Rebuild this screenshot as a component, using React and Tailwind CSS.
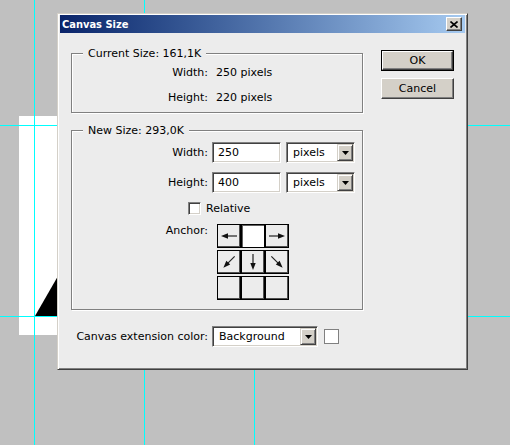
import React from "react";

const F = "font-['DejaVu_Sans',sans-serif]";

function Sunken({ className = "", children }) {
  return (
    <div
      className={`bg-white border border-t-[#808080] border-l-[#808080] border-r-white border-b-white shadow-[inset_1px_1px_0_#404040,inset_-1px_-1px_0_#d4d0c8] ${className}`}
    >
      {children}
    </div>
  );
}

function DropBtn() {
  return (
    <div className="w-[16px] h-full bg-[#d4d0c8] border border-t-[#d4d0c8] border-l-[#d4d0c8] border-r-[#404040] border-b-[#404040] shadow-[inset_1px_1px_0_#fff,inset_-1px_-1px_0_#808080] flex items-center justify-center">
      <svg width="7" height="4" viewBox="0 0 7 4">
        <polygon points="0,0 7,0 3.5,4" fill="#000" />
      </svg>
    </div>
  );
}

function Select({ value, className = "" }) {
  return (
    <Sunken className={`flex items-center p-[1px] ${className}`}>
      <span className="flex-1 pl-[5px]">{value}</span>
      <DropBtn />
    </Sunken>
  );
}

function Button({ children, def }) {
  return (
    <div className={`h-[21px] w-[73px] ${def ? "border border-black" : ""}`}>
      <div className="h-full w-full bg-[#d4d0c8] border border-t-white border-l-white border-r-[#404040] border-b-[#404040] shadow-[inset_-1px_-1px_0_#808080] flex items-center justify-center">
        {children}
      </div>
    </div>
  );
}

function Arrow({ rot }) {
  return (
    <svg width="22" height="22" viewBox="0 0 22 22">
      <g transform={`rotate(${rot} 11 11)`}>
        <line x1="3" y1="11" x2="15" y2="11" stroke="#222" strokeWidth="1.2" />
        <polygon points="19,11 12,8.3 12,13.7" fill="#111" />
      </g>
    </svg>
  );
}

function Cell({ children, sel }) {
  return (
    <div
      className={`w-[24px] h-[24px] border border-black flex items-center justify-center ${
        sel ? "bg-white shadow-[inset_1px_1px_0_#606060]" : "bg-[#ececec] shadow-[inset_-1px_-1px_0_#505050]"
      }`}
    >
      {children}
    </div>
  );
}

export default function App() {
  return (
    <div className={`relative w-[510px] h-[445px] bg-[#c0c0c0] overflow-hidden text-[11px] leading-[13px] text-black ${F}`}>
      {/* document canvas */}
      <div className="absolute left-[19px] top-[116px] w-[60px] h-[219px] bg-white" />
      <svg className="absolute left-0 top-0" width="510" height="445">
        <polygon points="58,276 35,316 58,316" fill="#000" />
      </svg>
      {/* guides */}
      <div className="absolute left-[34px] top-0 w-px h-full bg-[#00ffff]" />
      <div className="absolute left-[144px] top-0 w-px h-full bg-[#00ffff]" />
      <div className="absolute left-[254px] top-[300px] w-px h-[145px] bg-[#00ffff]" />
      <div className="absolute left-0 top-[125px] w-full h-px bg-[#00ffff]" />
      <div className="absolute left-0 top-[316px] w-full h-px bg-[#00ffff]" />

      {/* dialog */}
      <div className="absolute left-[57px] top-[13px] w-[411px] h-[357px] bg-[#ececec] border border-t-[#d4d0c8] border-l-[#d4d0c8] border-r-[#404040] border-b-[#404040] shadow-[inset_1px_1px_0_#fff,inset_-1px_-1px_0_#808080] px-[2px] pt-[1px] flex flex-col">
        {/* title bar */}
        <div className="h-[18px] flex items-center bg-gradient-to-r from-[#0a246a] to-[#a6caf0] pl-[2px]">
          <span className="flex-1 text-white font-bold font-['DejaVu_Sans_Condensed','DejaVu_Sans',sans-serif]">Canvas Size</span>
          <div className="mr-[3px] w-[16px] h-[14px] bg-[#d4d0c8] border border-t-white border-l-white border-r-[#404040] border-b-[#404040] shadow-[inset_-1px_-1px_0_#808080] flex items-center justify-center">
            <svg width="8" height="7" viewBox="0 0 8 7">
              <path d="M0.5 0.5 L7.5 6.5 M7.5 0.5 L0.5 6.5" stroke="#000" strokeWidth="1.6" />
            </svg>
          </div>
        </div>

        {/* body */}
        <div className="flex pl-[11px]">
          <div className="w-[292px] pt-[20px] flex flex-col">
            {/* current size */}
            <div className="relative h-[60px] border border-[#808080] shadow-[inset_1px_1px_0_#fff,1px_1px_0_#fff] pt-[12px] flex flex-col gap-[12px]">
              <span className="absolute left-[11px] top-[-7px] px-[5px] bg-[#ececec]">Current Size: 161,1K</span>
              <div className="flex">
                <span className="w-[136px] text-right">Width:</span>
                <span className="ml-[8px]">250 pixels</span>
              </div>
              <div className="flex">
                <span className="w-[136px] text-right">Height:</span>
                <span className="ml-[8px]">220 pixels</span>
              </div>
            </div>

            {/* new size */}
            <div className="relative mt-[17px] h-[180px] border border-[#808080] shadow-[inset_1px_1px_0_#fff,1px_1px_0_#fff] pt-[11px] flex flex-col">
              <span className="absolute left-[11px] top-[-7px] px-[5px] bg-[#ececec]">New Size: 293,0K</span>
              <div className="flex items-center h-[21px]">
                <span className="w-[136px] text-right">Width:</span>
                <Sunken className="ml-[4px] w-[69px] h-[21px] flex items-center pl-[5px]">250</Sunken>
                <Select value="pixels" className="ml-[5px] w-[69px] h-[21px]" />
              </div>
              <div className="flex items-center h-[21px] mt-[9px]">
                <span className="w-[136px] text-right">Height:</span>
                <Sunken className="ml-[4px] w-[69px] h-[21px] flex items-center pl-[5px]">400</Sunken>
                <Select value="pixels" className="ml-[5px] w-[69px] h-[21px]" />
              </div>
              <div className="flex items-center mt-[9px] ml-[116px]">
                <Sunken className="w-[13px] h-[13px]" />
                <span className="ml-[5px]">Relative</span>
              </div>
              <div className="flex items-start mt-[9px]">
                <span className="w-[136px] text-right">Anchor:</span>
                <div className="ml-[9px] flex flex-col gap-[2px]">
                  <div className="flex">
                    <Cell><Arrow rot={180} /></Cell>
                    <Cell sel />
                    <Cell><Arrow rot={0} /></Cell>
                  </div>
                  <div className="flex">
                    <Cell><Arrow rot={135} /></Cell>
                    <Cell><Arrow rot={90} /></Cell>
                    <Cell><Arrow rot={45} /></Cell>
                  </div>
                  <div className="flex">
                    <Cell />
                    <Cell />
                    <Cell />
                  </div>
                </div>
              </div>
            </div>

            {/* extension color */}
            <div className="flex items-center mt-[16px]">
              <span className="w-[137px] text-right">Canvas extension color:</span>
              <Select value="Background" className="ml-[4px] w-[106px] h-[21px]" />
              <div className="ml-[6px] w-[15px] h-[15px] bg-white border border-[#808080]" />
            </div>
          </div>

          {/* buttons */}
          <div className="ml-[18px] pt-[17px] flex flex-col gap-[7px]">
            <Button def>OK</Button>
            <Button>Cancel</Button>
          </div>
        </div>
      </div>
    </div>
  );
}
